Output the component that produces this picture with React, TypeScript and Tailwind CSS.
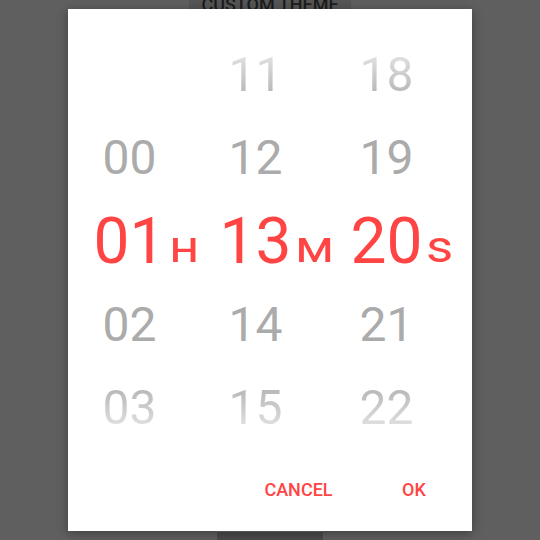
import clsx from "clsx";

type Col = { rows: (string | null)[]; label: string; labelW: string };

const columns: Col[] = [
  { rows: [null, "00", "01", "02", "03"], label: "н", labelW: "w-[54px]" },
  { rows: ["11", "12", "13", "14", "15"], label: "м", labelW: "w-[59px]" },
  { rows: ["18", "19", "20", "21", "22"], label: "s", labelW: "w-[40px]" },
];

const Cell = ({ value, index }: { value: string | null; index: number }) => {
  const selected = index === 2;
  return (
    <div
      className={clsx(
        "h-[83.33px] w-[72px] text-center leading-[83.33px]",
        selected ? "text-[64px] text-[#ff4444]" : "text-[48px]",
        index === 0 && "bg-linear-to-b from-[#fafafa] to-[#a0a0a0] bg-clip-text text-transparent",
        index === 4 && "bg-linear-to-b from-[#a0a0a0] to-[#fafafa] bg-clip-text text-transparent",
        (index === 1 || index === 3) && "text-[#ababab]"
      )}
    >
      {value ?? ""}
    </div>
  );
};

const App = () => {
  return (
    <div className="relative flex h-[540px] w-[540px] flex-col items-center overflow-hidden bg-[#5f5f5f] font-['Roboto',sans-serif]">
      {/* page behind the dialog */}
      <div className="mt-[-13px] h-[36px] w-[162px] bg-[#565656] text-center text-[18px] font-medium leading-[36px] text-[#1c1c1c]">
        CUSTOM THEME
      </div>
      <div className="mt-auto h-[9px] w-[106px] border-t border-[#6a6a6a] bg-[#4a4a4a]" />

      {/* dialog */}
      <div className="absolute left-[68px] top-[9px] flex h-[522px] w-[404px] flex-col bg-white pt-[24px] shadow-[0_2px_10px_rgba(0,0,0,0.35)]">
        <div className="flex h-[416.67px] pl-[25.5px]">
          {columns.map((col) => (
            <div key={col.label} className="flex">
              <div className="flex flex-col">
                {col.rows.map((v, i) => (
                  <Cell key={i} value={v} index={i} />
                ))}
              </div>
              <div className={clsx("flex flex-col justify-center pl-[3px]", col.labelW)}>
                <div className="mt-[13.6px] origin-left scale-x-[1.2] text-[44px] leading-[83.33px] text-[#ff4444]">
                  {col.label}
                </div>
              </div>
            </div>
          ))}
        </div>

        <div className="mt-[16.33px] flex h-[48px] justify-end pr-[14px] text-[18px] font-medium text-[#ff4444]">
          <button className="w-[93px] text-center">CANCEL</button>
          <button className="ml-[25px] w-[88px] text-center">OK</button>
        </div>
      </div>
    </div>
  );
};

export default App;
